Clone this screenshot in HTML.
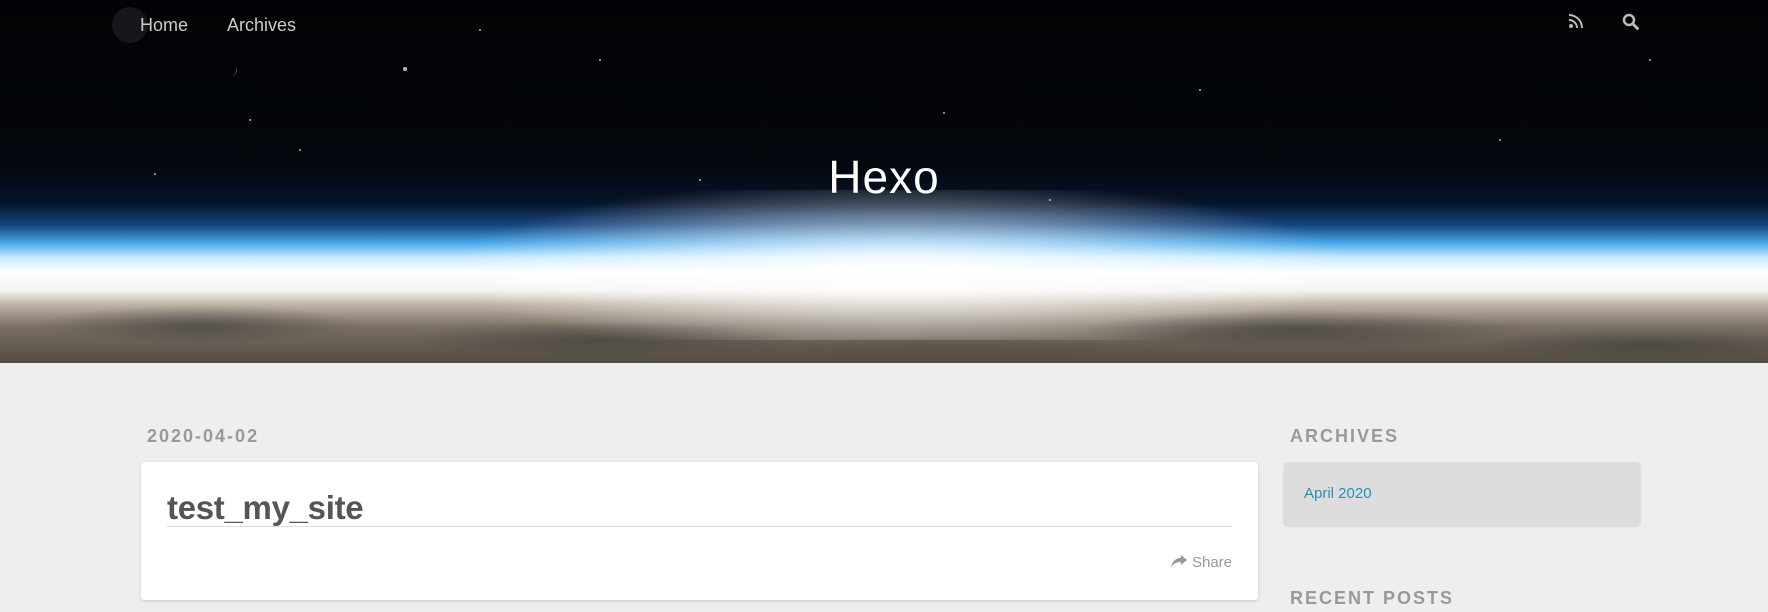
<!DOCTYPE html>
<html><head><meta charset="utf-8"><style>
*{margin:0;padding:0;box-sizing:border-box}
body{width:1768px;height:612px;overflow:hidden;background:#eeeeee;font-family:"Liberation Sans",sans-serif;position:relative}
#hdr{position:absolute;left:0;top:0;width:1768px;height:363px;overflow:hidden;
background:linear-gradient(to bottom,#020305 0%,#03060c 45%,#06142a 56%,#14457f 62%,#49a8e8 67%,#c9ebff 71%,#ffffff 75%,#f6f4f0 80%,#bdb2a4 84%,#7a7064 90%,#534c44 100%)}
#glow{position:absolute;left:0;top:190px;width:1768px;height:150px;background:radial-gradient(ellipse 450px 90px at 900px 80px,rgba(255,255,255,.9),rgba(255,255,255,0))}
#clouds{position:absolute;left:0;top:295px;width:1768px;height:68px;
background:radial-gradient(ellipse 160px 20px at 200px 30px,rgba(40,40,45,.45),transparent),radial-gradient(ellipse 200px 18px at 600px 45px,rgba(40,40,45,.4),transparent),radial-gradient(ellipse 220px 20px at 1300px 35px,rgba(40,40,45,.45),transparent),radial-gradient(ellipse 180px 16px at 1650px 50px,rgba(40,40,45,.4),transparent),radial-gradient(ellipse 260px 14px at 950px 55px,rgba(80,70,60,.4),transparent)}
.nav{position:absolute;top:15px;color:#ccc;font-size:18px}
#title{position:absolute;left:0;width:1768px;top:150px;text-align:center;color:#fff;font-size:46px;font-weight:300;letter-spacing:1px}
.date{position:absolute;left:147px;top:426px;color:#999;font-weight:bold;font-size:18px;letter-spacing:2px}
.card{position:absolute;left:141px;top:462px;width:1117px;height:138px;background:#fff;border-radius:3px;box-shadow:0 1px 3px rgba(0,0,0,.15)}
.card h1{position:absolute;left:26px;top:27px;font-size:33px;color:#555;font-weight:bold;letter-spacing:-.3px}
.card .hr{position:absolute;left:26px;right:26px;top:64px;border-top:1px solid #ddd}
.share{position:absolute;right:26px;top:92px;color:#999;font-size:15px}
.wt{position:absolute;left:1290px;color:#999;font-weight:bold;font-size:18px;letter-spacing:2px}
.side{position:absolute;left:1284px;top:462px;width:356px;height:63px;background:#ddd;border-radius:3px;box-shadow:0 1px 2px rgba(0,0,0,.15)}
.side a{position:absolute;left:20px;top:23px;color:#258fb8;font-size:15px;text-decoration:none}
</style></head><body>
<div id="hdr"><div id="glow"></div><div id="clouds"></div>
<svg width="1768" height="300" style="position:absolute;left:0;top:0">
<g fill="#fff" opacity=".7">
<circle cx="405" cy="69" r="2"/><circle cx="155" cy="174" r="1"/><circle cx="944" cy="113" r="1"/><circle cx="300" cy="150" r="1"/><circle cx="1200" cy="90" r="1"/><circle cx="1500" cy="140" r="1"/><circle cx="600" cy="60" r="1"/><circle cx="1050" cy="200" r="1"/><circle cx="250" cy="120" r="1"/><circle cx="1650" cy="60" r="1"/><circle cx="700" cy="180" r="1"/><circle cx="480" cy="30" r="1"/></g>
<circle cx="130" cy="25" r="18" fill="#1a1d22" opacity=".8"/>
<path d="M236 67a7 7 0 0 1-4 9a6 6 0 0 0 4-9z" fill="#ccc" opacity=".7"/>
</svg>
<div class="nav" style="left:140px">Home</div>
<div class="nav" style="left:227px">Archives</div>
<svg style="position:absolute;left:1569px;top:14px" width="14" height="14" viewBox="0 0 14 14" fill="#bbb"><circle cx="2" cy="12" r="2"/><path d="M0 5a9 9 0 0 1 9 9H7A7 7 0 0 0 0 7z"/><path d="M0 0a14 14 0 0 1 14 14h-2A12 12 0 0 0 0 2z"/></svg>
<svg style="position:absolute;left:1622px;top:13px" width="17" height="17" viewBox="0 0 17 17"><circle cx="7" cy="7" r="5" stroke="#bbb" stroke-width="2.5" fill="none"/><path d="M11 11l4.5 4.5" stroke="#bbb" stroke-width="3" stroke-linecap="round"/></svg>
<div id="title">Hexo</div>
</div>
<div class="date">2020-04-02</div>
<div class="card"><h1>test_my_site</h1><div class="hr"></div>
<div class="share"><svg width="16" height="13" viewBox="0 0 16 13" fill="#999" style="vertical-align:-1px;margin-right:5px"><path d="M10 0l6 5-6 5V7C5 7 2 9 0 13 1 7 4 3 10 3z"/></svg>Share</div></div>
<div class="wt" style="top:426px">ARCHIVES</div>
<div class="side"><a>April 2020</a></div>
<div class="wt" style="top:588px">RECENT POSTS</div>
</body></html>
